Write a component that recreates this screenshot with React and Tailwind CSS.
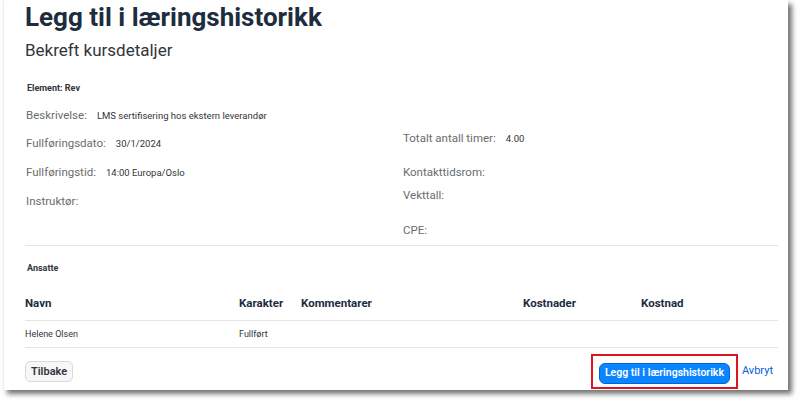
import React from 'react'

const font = { fontFamily: 'Roboto, "Noto Sans", Arial, sans-serif' }

function Field({ label, value, className = '' }) {
  return (
    <div className={`flex items-baseline ${className}`}>
      <span className="text-[11.5px] text-[#6a6d70]">{label}</span>
      {value && <span className="ml-[10px] text-[9.5px] text-[#32363a]">{value}</span>}
    </div>
  )
}

export default function App() {
  return (
    <div className="w-[800px] h-[403px] bg-white overflow-hidden" style={font}>
      <div className="ml-[3px] w-[785px] h-[390px] bg-white border-l border-[#eeeeee] shadow-[4px_4px_5px_rgba(0,0,0,0.55)] pl-[21px] pr-[10px] flex flex-col">
        <h1 className="mt-[0px] text-[26px] leading-[34px] font-bold text-[#1d2d3e]">Legg til i læringshistorikk</h1>
        <h2 className="mt-[5px] text-[17px] leading-[22px] text-[#32363a]">Bekreft kursdetaljer</h2>
        <div className="mt-[21px] pl-[2px] text-[9px] font-bold text-[#32363a] leading-[12px]">Element: Rev</div>

        <div className="flex">
          <div className="w-[378px] flex flex-col pl-[1px]">
            <Field label="Beskrivelse:" value="LMS sertifisering hos ekstern leverandør" className="mt-[13px] h-[16px]" />
            <Field label="Fullføringsdato:" value="30/1/2024" className="mt-[12px] h-[16px]" />
            <Field label="Fullføringstid:" value="14:00 Europa/Oslo" className="mt-[13px] h-[16px]" />
            <Field label="Instruktør:" className="mt-[13px] h-[16px]" />
          </div>
          <div className="flex-1 flex flex-col">
            <Field label="Totalt antall timer:" value="4.00" className="mt-[36px] h-[16px]" />
            <Field label="Kontakttidsrom:" className="mt-[18px] h-[16px]" />
            <Field label="Vekttall:" className="mt-[7px] h-[16px]" />
            <Field label="CPE:" className="mt-[19px] h-[16px]" />
          </div>
        </div>

        <div className="mt-[7px] border-t border-[#e5e5e5]" />
        <div className="mt-[16px] pl-[2px] text-[9px] font-bold text-[#32363a] leading-[12px]">Ansatte</div>

        <div className="mt-[21px] grid grid-cols-[214px_62px_222px_118px_1fr] text-[11.5px] font-bold text-[#1d2d3e] leading-[16px] pb-[9px] border-b border-[#e5e5e5]">
          <span>Navn</span>
          <span>Karakter</span>
          <span>Kommentarer</span>
          <span>Kostnader</span>
          <span>Kostnad</span>
        </div>
        <div className="grid grid-cols-[214px_1fr] text-[9px] text-[#32363a] leading-[12px] pt-[7px] pb-[7px] border-b border-[#e5e5e5]">
          <span>Helene Olsen</span>
          <span>Fullført</span>
        </div>

        <div className="mt-[6px] flex items-center">
          <button className="h-[21px] px-[5px] rounded-[5px] border border-[#d9d9d9] bg-[#f7f7f7] text-[11px] font-semibold text-[#32363a] leading-none">Tilbake</button>
          <div className="ml-auto mr-[5px] flex items-center">
            <div className="border-2 border-[#e0141e] px-[6px] py-[3px]">
              <button className="h-[21px] px-[5px] rounded-[6px] bg-[#0a84ff] border border-[#0064d9] text-[10.5px] font-semibold text-white leading-none">Legg til i læringshistorikk</button>
            </div>
            <span className="ml-[4px] text-[11px] text-[#0064d9]">Avbryt</span>
          </div>
        </div>
      </div>
    </div>
  )
}
